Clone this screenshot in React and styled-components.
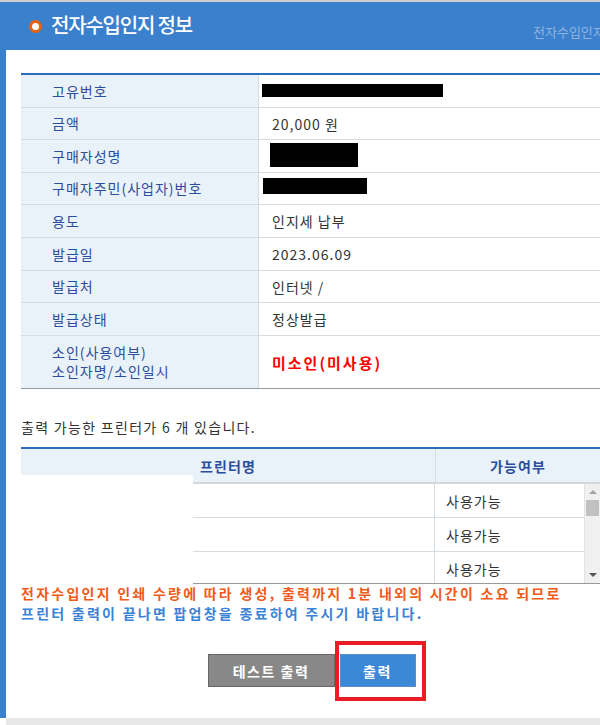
import React from "react";
import styled, { createGlobalStyle } from "styled-components";

const Global = createGlobalStyle`
  html, body { margin: 0; padding: 0; background: #fff; }
  body { font-family: "Noto Sans CJK KR", "Noto Sans", sans-serif; }
`;

const Page = styled.div`
  width: 600px;
  height: 725px;
  overflow: hidden;
  border-top: 2px solid #cfcfcf;
  box-sizing: border-box;
  background: #fff;
`;

const Frame = styled.div`
  background: #3b80cc;
  padding-left: 6px;
  height: 716px;
  display: flex;
  flex-direction: column;
`;

const Header = styled.div`
  height: 48px;
  display: flex;
  align-items: center;
  padding-left: 23px;
  white-space: nowrap;
`;

const TitleGroup = styled.div`
  flex: 0 0 504px;
  display: flex;
  align-items: center;
  gap: 9px;
`;

const Dot = styled.span`
  width: 7px;
  height: 7px;
  border-radius: 50%;
  background: #fff;
  border: 3px solid #e8620f;
`;

const Title = styled.h1`
  margin: 0;
  font-size: 20px;
  font-weight: 500;
  color: #fff;
  letter-spacing: -1.2px;
  line-height: 1;
  padding-bottom: 2px;
`;

const Crumb = styled.span`
  flex-shrink: 0;
  font-size: 13px;
  color: #8fb2de;
  margin-top: 10px;
`;

const Content = styled.div`
  flex: 1;
  background: #fff;
  padding: 23px 0 0 15px;
  display: flex;
  flex-direction: column;
`;

const InfoTable = styled.div`
  border-top: 2px solid #2a6dbb;
  display: flex;
  flex-direction: column;
`;

const Row = styled.div`
  display: grid;
  grid-template-columns: 238px 1fr;
  height: ${(p) => p.$h}px;
  border-bottom: 1px solid ${(p) => (p.$last ? "#9a9a9a" : "#d5dce2")};
  box-sizing: border-box;
`;

const Label = styled.div`
  background: #e9f2f9;
  border-right: 1px solid #d5dce2;
  color: #2c4d9c;
  font-size: 14px;
  letter-spacing: 1px;
  padding-left: 31px;
  display: flex;
  flex-direction: column;
  justify-content: center;
  line-height: 19px;
`;

const Value = styled.div`
  color: #333;
  font-size: ${(p) => (p.$red ? 15 : 14)}px;
  letter-spacing: ${(p) => (p.$red ? 2 : 1)}px;
  padding-left: 13px;
  display: flex;
  align-items: center;
  font-weight: ${(p) => (p.$red ? 700 : 400)};
  ${(p) => p.$red && "color: #ff0000;"}
`;

const Redact = styled.span`
  display: inline-block;
  background: #000;
  width: ${(p) => p.$w}px;
  height: ${(p) => p.$h}px;
  margin-left: ${(p) => p.$ml}px;
  margin-top: ${(p) => p.$mt || 0}px;
`;

const Count = styled.p`
  margin: 29px 0 0 0;
  font-size: 14px;
  letter-spacing: 1.3px;
  color: #333;
  line-height: 18px;
`;

const PrinterTable = styled.div`
  position: relative;
  margin-top: 11px;
  border-top: 2px solid #2a6dbb;
`;

const HeadRow = styled.div`
  display: grid;
  grid-template-columns: 414px 1fr;
  height: 33px;
  background: #e9f2f9;
  border-bottom: 2px solid #d3d8dc;
`;

const HeadCell = styled.div`
  display: flex;
  align-items: center;
  justify-content: center;
  color: #2c4d9c;
  font-size: 14px;
  font-weight: 700;
  letter-spacing: 1.1px;
  & + & { border-left: 1px solid #d5dce2; }
`;

const Body = styled.div`
  display: flex;
  height: 99px;
  border-bottom: 1px solid #9a9a9a;
`;

const Rows = styled.div`
  flex: 1;
  overflow: hidden;
`;

const PRow = styled.div`
  display: grid;
  grid-template-columns: 413px 1fr;
  height: 34px;
  border-bottom: 1px solid #d5dce2;
  box-sizing: border-box;
`;

const PCell = styled.div`
  display: flex;
  align-items: center;
  font-size: 14px;
  letter-spacing: 1px;
  color: #333;
  padding-left: 11px;
  & + & { border-left: 1px solid #d5dce2; }
`;

const ScrollBar = styled.div`
  width: 15px;
  background: #f0f0f0;
  border-left: 1px solid #e2e2e2;
  display: flex;
  flex-direction: column;
  align-items: center;
`;

const Arrow = styled.span`
  width: 0;
  height: 0;
  border-left: 4px solid transparent;
  border-right: 4px solid transparent;
  ${(p) =>
    p.$down
      ? "border-top: 4px solid #555; margin-top: auto; margin-bottom: 6px;"
      : "border-bottom: 4px solid #a3a3a3; margin-top: 6px;"}
`;

const Thumb = styled.span`
  width: 13px;
  height: 16px;
  background: #c1c1c1;
  margin-top: 6px;
`;

const Cover = styled.div`
  position: absolute;
  left: 0;
  top: 26px;
  width: 172px;
  height: 110px;
  background: #fff;
`;

const Notice = styled.div`
  margin-top: -1px;
  font-size: 14px;
  font-weight: 700;
  line-height: 20px;
  letter-spacing: 2.25px;
  white-space: nowrap;
`;

const NoticeLine = styled.div`
  color: ${(p) => p.$c};
`;

const Buttons = styled.div`
  display: flex;
  justify-content: center;
  gap: 5px;
  margin-top: 31px;
  padding-left: 2px;
`;

const Btn = styled.button`
  height: 33px;
  width: ${(p) => p.$w}px;
  border: 1px solid ${(p) => (p.$gray ? "#666" : "#5a8fc7")};
  background: ${(p) => (p.$gray ? "#888" : "#3a88d6")};
  color: #fff;
  font-family: inherit;
  font-size: 14px;
  font-weight: 700;
  letter-spacing: 1.5px;
  padding: 0;
`;

const Highlight = styled.div`
  position: relative;
  display: flex;
  &::after {
    content: "";
    position: absolute;
    left: -5px;
    top: -13px;
    right: -10px;
    bottom: -14px;
    border: 4px solid #ec1c24;
  }
`;

const Footer = styled.div`
  margin-left: 6px;
  height: 20px;
  background: #e8e8e8;
  display: flex;
  justify-content: center;
  font-size: 13px;
  color: #222;
  padding-top: 3px;
  padding-right: 6px;
`;

const rows = [
  { k: "고유번호", v: <Redact $w={181} $h={13} $ml={-10} $mt={-2} /> },
  { k: "금액", v: "20,000 원" },
  { k: "구매자성명", v: <Redact $w={88} $h={24} $ml={-2} $mt={-2} /> },
  { k: "구매자주민(사업자)번호", v: <Redact $w={104} $h={16} $ml={-9} $mt={-6} /> },
  { k: "용도", v: "인지세 납부" },
  { k: "발급일", v: "2023.06.09" },
  { k: "발급처", v: "인터넷 /" },
  { k: "발급상태", v: "정상발급" },
];

const heights = [33, 32, 33, 32, 33, 33, 32, 33];

export default function App() {
  return (
    <>
      <Global />
      <Page>
        <Frame>
          <Header>
            <TitleGroup>
              <Dot />
              <Title>전자수입인지 정보</Title>
            </TitleGroup>
            <Crumb>전자수입인지 정보</Crumb>
          </Header>
          <Content>
            <InfoTable>
              {rows.map((r, i) => (
                <Row key={r.k} $h={heights[i]}>
                  <Label>{r.k}</Label>
                  <Value>{r.v}</Value>
                </Row>
              ))}
              <Row $h={53} $last>
                <Label>
                  <span>소인(사용여부)</span>
                  <span>소인자명/소인일시</span>
                </Label>
                <Value $red>미소인(미사용)</Value>
              </Row>
            </InfoTable>

            <Count>출력 가능한 프린터가 6 개 있습니다.</Count>

            <PrinterTable>
              <HeadRow>
                <HeadCell>프린터명</HeadCell>
                <HeadCell>가능여부</HeadCell>
              </HeadRow>
              <Body>
                <Rows>
                  {[0, 1, 2].map((i) => (
                    <PRow key={i}>
                      <PCell />
                      <PCell>사용가능</PCell>
                    </PRow>
                  ))}
                </Rows>
                <ScrollBar>
                  <Arrow />
                  <Thumb />
                  <Arrow $down />
                </ScrollBar>
              </Body>
              <Cover />
            </PrinterTable>

            <Notice>
              <NoticeLine $c="#f05a1a">
                전자수입인지 인쇄 수량에 따라 생성, 출력까지 1분 내외의 시간이 소요 되므로
              </NoticeLine>
              <NoticeLine $c="#3b83d6">
                프린터 출력이 끝나면 팝업창을 종료하여 주시기 바랍니다.
              </NoticeLine>
            </Notice>

            <Buttons>
              <Btn $gray $w={127}>테스트 출력</Btn>
              <Highlight>
                <Btn $w={76}>출력</Btn>
              </Highlight>
            </Buttons>
          </Content>
        </Frame>
        <Footer>닫 기</Footer>
      </Page>
    </>
  );
}
